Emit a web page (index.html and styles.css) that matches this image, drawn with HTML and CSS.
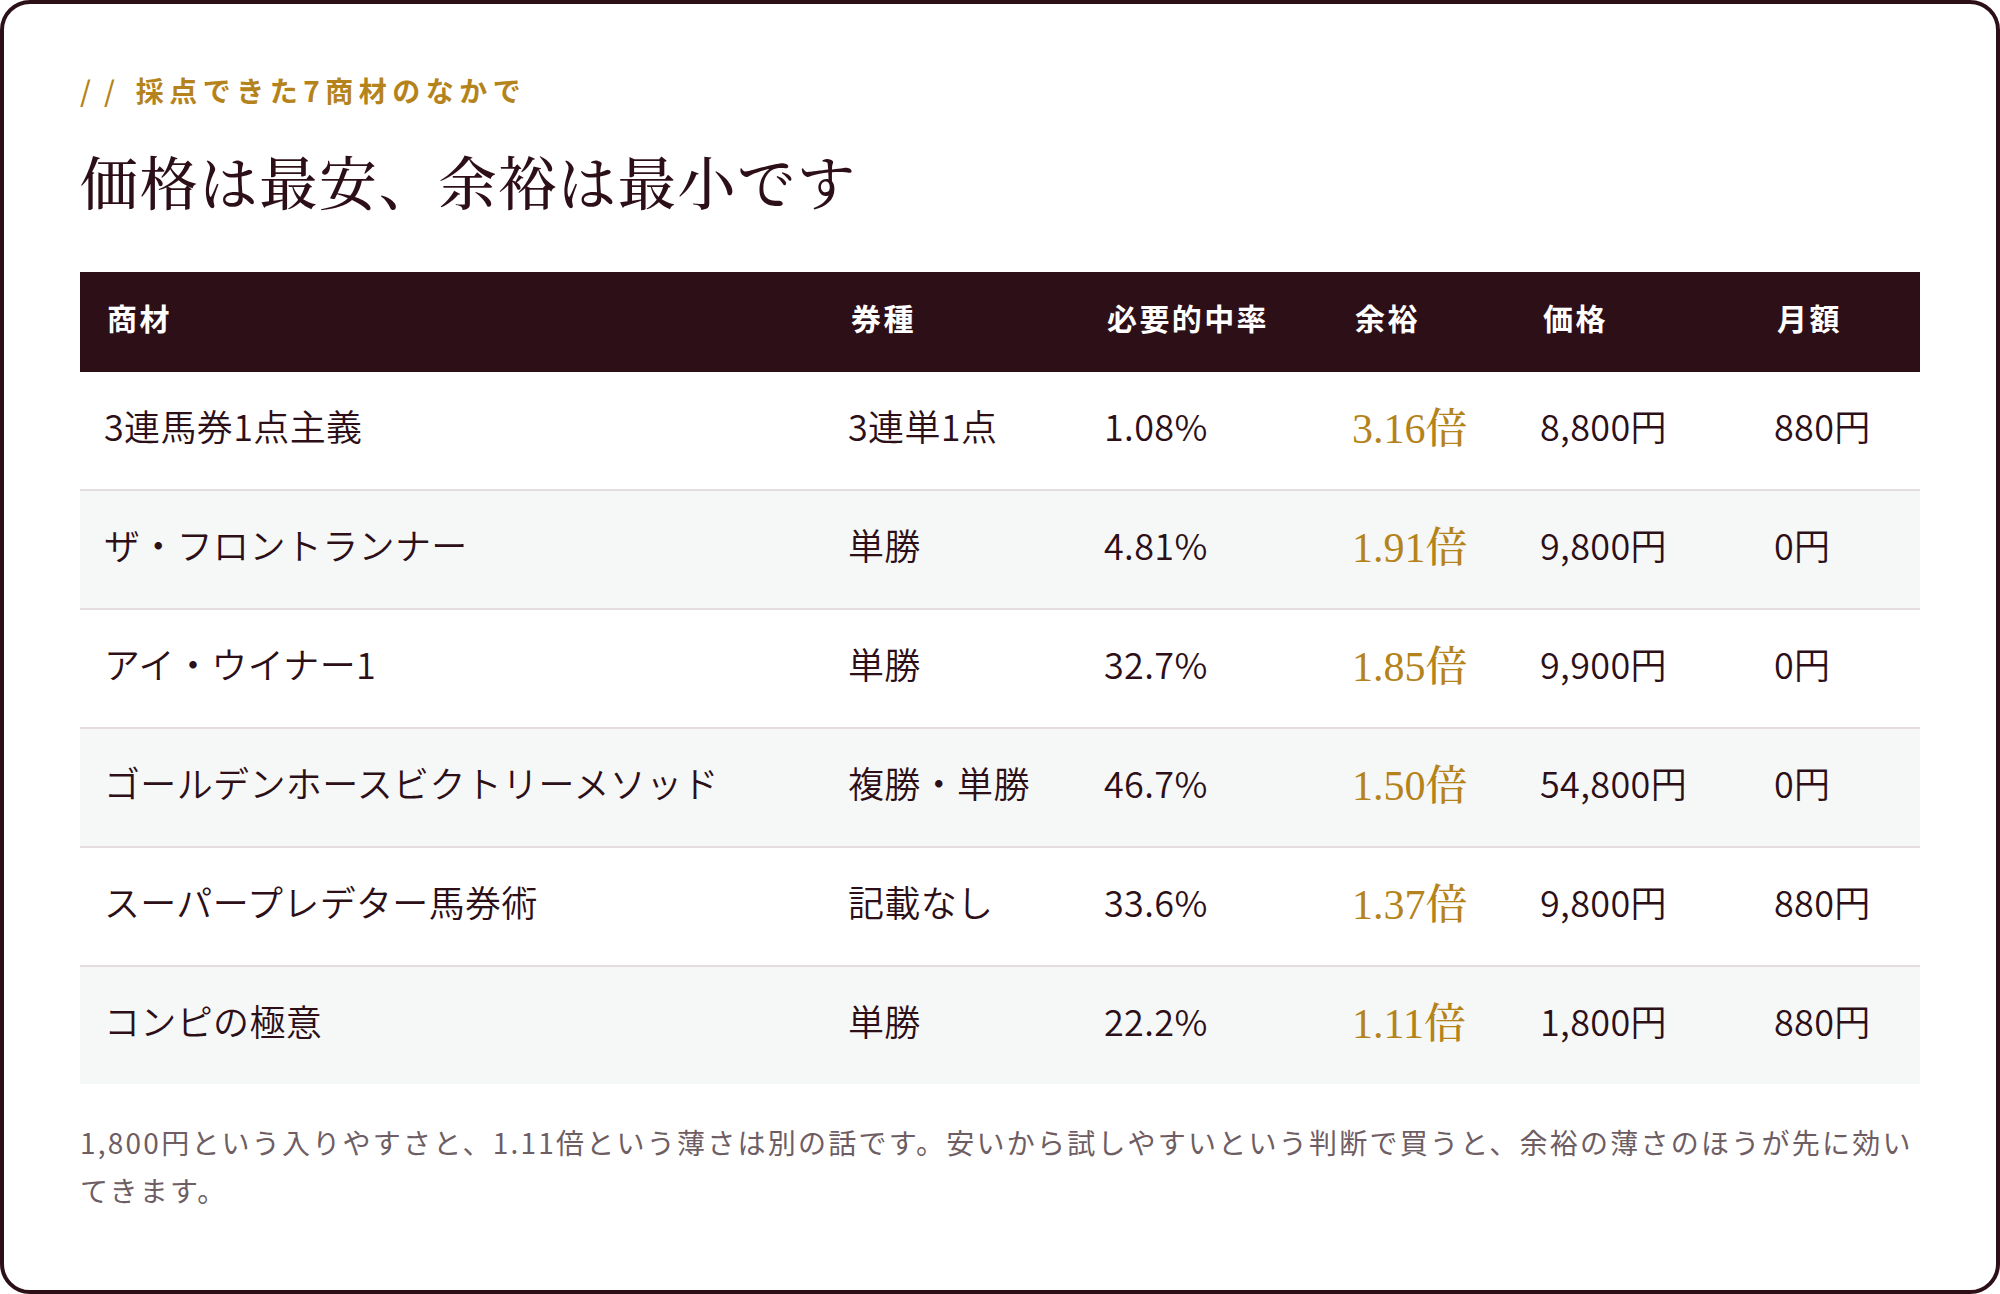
FILE: index.html
```html
<!DOCTYPE html>
<html lang="ja">
<head>
<meta charset="utf-8">
<title>価格は最安、余裕は最小です</title>
<link rel="stylesheet" href="styles.css">
</head>
<body>
<section class="card">
  <p class="eyebrow"><span class="slashes">//</span>採点できた7商材のなかで</p>
  <h2 class="title">価格は最安、余裕は最小です</h2>
  <table class="cmp">
    <colgroup>
      <col class="c-name">
      <col class="c-type">
      <col class="c-rate">
      <col class="c-margin">
      <col class="c-price">
      <col class="c-month">
    </colgroup>
    <thead>
      <tr><th>商材</th><th>券種</th><th>必要的中率</th><th>余裕</th><th>価格</th><th>月額</th></tr>
    </thead>
    <tbody>
      <tr><td>3連馬券1点主義</td><td>3連単1点</td><td>1.08%</td><td class="mg">3.16倍</td><td>8,800円</td><td>880円</td></tr>
      <tr><td>ザ・フロントランナー</td><td>単勝</td><td>4.81%</td><td class="mg">1.91倍</td><td>9,800円</td><td>0円</td></tr>
      <tr><td>アイ・ウイナー1</td><td>単勝</td><td>32.7%</td><td class="mg">1.85倍</td><td>9,900円</td><td>0円</td></tr>
      <tr><td>ゴールデンホースビクトリーメソッド</td><td>複勝・単勝</td><td>46.7%</td><td class="mg">1.50倍</td><td>54,800円</td><td>0円</td></tr>
      <tr><td>スーパープレデター馬券術</td><td>記載なし</td><td>33.6%</td><td class="mg">1.37倍</td><td>9,800円</td><td>880円</td></tr>
      <tr><td>コンピの極意</td><td>単勝</td><td>22.2%</td><td class="mg">1.11倍</td><td>1,800円</td><td>880円</td></tr>
    </tbody>
  </table>
  <p class="note">1,800円という入りやすさと、1.11倍という薄さは別の話です。安いから試しやすいという判断で買うと、余裕の薄さのほうが先に効いてきます。</p>
</section>
</body>
</html>
```

FILE: styles.css
```css
html, body {
  margin: 0;
  padding: 0;
  background: #ffffff;
}

body {
  font-family: "Noto Sans CJK JP", "Noto Sans", sans-serif;
  color: #2d0f18;
}

.card {
  box-sizing: border-box;
  width: 100%;
  height: 100vh;
  border: 4px solid #2d0f18;
  border-radius: 30px;
  padding: 68px 76px 0;
  background: #ffffff;
}

.eyebrow {
  margin: 0;
  font-size: 28px;
  line-height: 36px;
  font-weight: 700;
  letter-spacing: 5.5px;
  color: #b5831b;
}

.slashes {
  font-weight: 500;
  letter-spacing: 13px;
  margin-right: 8px;
}

.title {
  margin: 30px 0 0;
  font-family: "Noto Serif CJK JP", "Noto Serif JP", "Liberation Serif", serif;
  font-weight: 500;
  font-size: 58px;
  line-height: 84px;
  letter-spacing: 0.03em;
  color: #2d0f18;
}

.cmp {
  margin-top: 50px;
  width: 100%;
  table-layout: fixed;
  border-collapse: separate;
  border-spacing: 0;
}

.c-name { width: 744px; }
.c-type { width: 256px; }
.c-rate { width: 248px; }
.c-margin { width: 188px; }
.c-price { width: 234px; }
.c-month { width: 170px; }

.cmp th {
  box-sizing: border-box;
  height: 100px;
  padding: 0 0 10px 27px;
  background: #2d0f18;
  color: #ffffff;
  font-size: 30px;
  font-weight: 700;
  letter-spacing: 0.08em;
  text-align: left;
  vertical-align: middle;
}

.cmp td {
  box-sizing: border-box;
  height: 119px;
  padding: 0 0 12px 24px;
  border-bottom: 2px solid #e4dcdf;
  font-size: 36px;
  font-weight: 350;
  letter-spacing: 0.01em;
  text-align: left;
  vertical-align: middle;
  white-space: nowrap;
}

.cmp tbody tr:nth-child(even) td {
  background: #f6f8f7;
}

.cmp tbody tr:last-child td {
  border-bottom: none;
  height: 117px;
}

.cmp td.mg {
  font-family: "Liberation Serif", "Noto Serif CJK JP", serif;
  font-size: 42px;
  font-weight: 500;
  letter-spacing: 0;
  color: #b5831b;
}

.note {
  margin: 34px 0 0;
  font-size: 28px;
  line-height: 48px;
  letter-spacing: 0.08em;
  color: #6e5d63;
}
```
